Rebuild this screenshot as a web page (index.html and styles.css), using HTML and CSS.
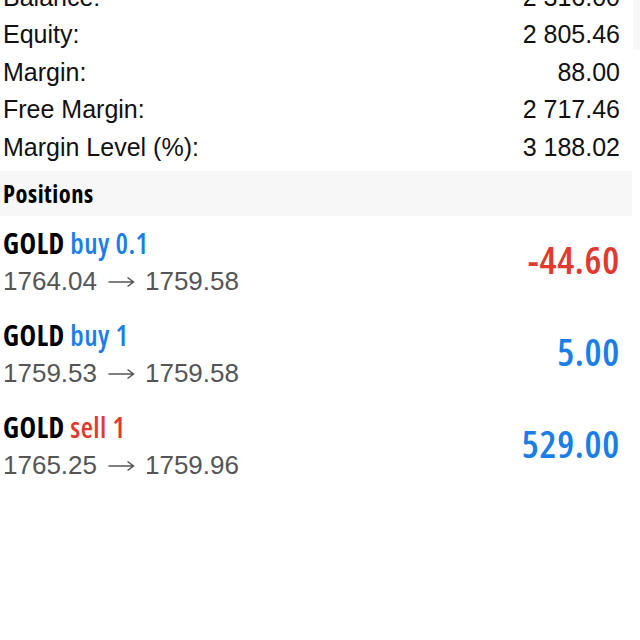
FILE: index.html
```html
<!DOCTYPE html>
<html>
<head>
<meta charset="utf-8">
<link rel="stylesheet" href="styles.css">
</head>
<body>
<div class="screen">
  <div class="summary">
    <div class="row"><span>Balance:</span><span>2 316.00</span></div>
    <div class="row"><span>Equity:</span><span>2 805.46</span></div>
    <div class="row"><span>Margin:</span><span>88.00</span></div>
    <div class="row"><span>Free Margin:</span><span>2 717.46</span></div>
    <div class="row"><span>Margin Level (%):</span><span>3 188.02</span></div>
  </div>
  <div class="section">Positions</div>
  <div class="positions">
    <div class="pos">
      <div class="info">
        <div class="title">GOLD <span class="buy">buy 0.1</span></div>
        <div class="prices">1764.04<svg class="arrow" width="27" height="12" viewBox="0 0 27 12"><path d="M0.5 6H25.5M19.5 1.5L25.5 6L19.5 10.5" fill="none" stroke="#555555" stroke-width="1.5"/></svg>1759.58</div>
      </div>
      <div class="profit loss">-44.60</div>
    </div>
    <div class="pos">
      <div class="info">
        <div class="title">GOLD <span class="buy">buy 1</span></div>
        <div class="prices">1759.53<svg class="arrow" width="27" height="12" viewBox="0 0 27 12"><path d="M0.5 6H25.5M19.5 1.5L25.5 6L19.5 10.5" fill="none" stroke="#555555" stroke-width="1.5"/></svg>1759.58</div>
      </div>
      <div class="profit gain">5.00</div>
    </div>
    <div class="pos">
      <div class="info">
        <div class="title">GOLD <span class="sell">sell 1</span></div>
        <div class="prices">1765.25<svg class="arrow" width="27" height="12" viewBox="0 0 27 12"><path d="M0.5 6H25.5M19.5 1.5L25.5 6L19.5 10.5" fill="none" stroke="#555555" stroke-width="1.5"/></svg>1759.96</div>
      </div>
      <div class="profit gain">529.00</div>
    </div>
  </div>
  <div class="scroller"></div>
</div>
</body>
</html>
```
FILE: styles.css
```css
html, body {
  margin: 0;
  padding: 0;
  background: #ffffff;
}
.screen {
  position: relative;
  width: 640px;
  height: 640px;
  overflow: hidden;
}
.summary {
  width: 632px;
  margin-top: -21px;
  font-family: "Liberation Sans", Arial, sans-serif;
  font-size: 25px;
  color: #111111;
}
.row {
  display: flex;
  justify-content: space-between;
  height: 37.4px;
  line-height: 37.4px;
  padding: 0 12px 0 3px;
}
.section {
  width: 629px;
  margin-top: 5px;
  height: 45px;
  line-height: 45px;
  padding-left: 3px;
  background: #f7f7f7;
  font-family: "Open Sans", sans-serif;
  font-stretch: 75%;
  font-weight: bold;
  font-size: 24.5px;
  letter-spacing: 0.5px;
  color: #000000;
}
.positions {
  width: 632px;
  margin-top: -3px;
}
.pos {
  display: flex;
  justify-content: space-between;
  align-items: center;
  height: 92px;
  padding: 0 12px 0 3px;
}
.info {
  display: flex;
  flex-direction: column;
  margin-top: 6px;
}
.title {
  font-family: "Open Sans", sans-serif;
  font-stretch: 75%;
  font-weight: 700;
  font-size: 28px;
  letter-spacing: 0.5px;
  line-height: 38px;
  color: #000000;
}
.prices {
  font-family: "Liberation Sans", Arial, sans-serif;
  font-size: 26px;
  line-height: 38px;
  color: #555555;
}
.arrow {
  margin: 0 10px 0 11px;
  vertical-align: 2px;
}
.buy { color: #1a7ee6; font-weight: 600; }
.sell { color: #e03a2e; font-weight: 600; }
.profit {
  font-family: "Open Sans", sans-serif;
  font-stretch: 75%;
  font-weight: 600;
  font-size: 38px;
  letter-spacing: 0.7px;
}
.loss { color: #e03a2e; }
.gain { color: #1a7ee6; }
.scroller {
  position: absolute;
  top: 0;
  right: 0;
  width: 7px;
  height: 50px;
  background: #f8f8f8;
}
```
